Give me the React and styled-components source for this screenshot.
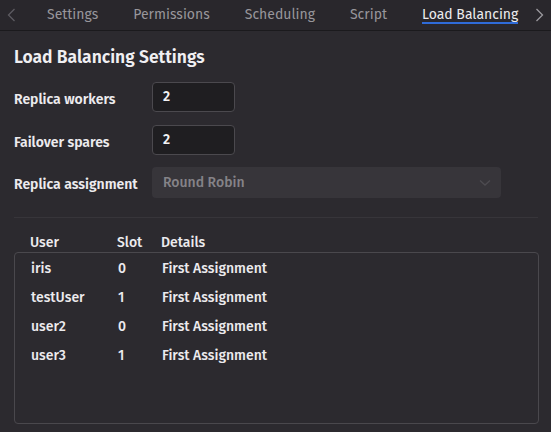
import React from "react";
import styled, { createGlobalStyle } from "styled-components";

const GlobalStyle = createGlobalStyle`
  html, body {
    margin: 0;
    padding: 0;
    background-color: #2c2a2f;
  }
  body {
    font-family: "Fira Sans", "Lato", "Noto Sans", sans-serif;
    color: #e8e7ea;
  }
`;

const Page = styled.div`
  width: 551px;
  height: 432px;
  overflow: hidden;
  display: flex;
  flex-direction: column;
`;

const TabBar = styled.div`
  height: 31px;
  flex: 0 0 31px;
  box-sizing: border-box;
  background-color: #29272c;
  border-bottom: 1px solid #1b1a1d;
  display: flex;
  align-items: center;
  padding: 0 0 0 4px;
`;

const Chevron = styled.span`
  width: 14px;
  height: 30px;
  display: flex;
  align-items: center;
  justify-content: center;
  color: ${({ dim }) => (dim ? "#5d5b61" : "#9b999e")};
  margin-right: ${({ right }) => (right ? "0" : "29px")};
  margin-left: ${({ right }) => (right ? "14px" : "0")};
`;

const Tabs = styled.div`
  display: flex;
  gap: 35px;
`;

const Tab = styled.span`
  position: relative;
  font-size: 14px;
  line-height: 30px;
  color: ${({ active }) => (active ? "#ececee" : "#98969b")};
  white-space: nowrap;

  &::after {
    content: "";
    display: ${({ active }) => (active ? "block" : "none")};
    position: absolute;
    left: 0;
    right: 0;
    bottom: 6px;
    height: 2px;
    background-color: #2f6bd8;
  }
`;

const Content = styled.div`
  padding: 10px 12px 0 14px;
  display: flex;
  flex-direction: column;
`;

const Heading = styled.h2`
  margin: 0;
  font-size: 17.5px;
  font-weight: 600;
  line-height: 34px;
  color: #f0eff2;
`;

const Form = styled.div`
  display: flex;
  flex-direction: column;
  gap: 13px;
  margin-top: 7px;
`;

const Row = styled.div`
  display: flex;
  align-items: center;
  & + & + & {
    margin-top: -1px;
  }
`;

const Label = styled.label`
  width: 138px;
  font-size: 14px;
  font-weight: 600;
  color: #ecebee;
  padding-top: 4px;
`;

const NumberInput = styled.div`
  width: 83px;
  height: 30px;
  box-sizing: border-box;
  background-color: #1f1e21;
  border: 1px solid #4b494e;
  border-radius: 4px;
  font-size: 14px;
  font-weight: 600;
  line-height: 28px;
  padding-left: 10px;
  color: #f2f2f4;
`;

const Select = styled.div`
  width: 349px;
  height: 31px;
  box-sizing: border-box;
  background-color: #37353a;
  border-radius: 4px;
  display: flex;
  align-items: center;
  justify-content: space-between;
  padding: 0 10px 0 11px;
  font-size: 14px;
  font-weight: 500;
  color: #858388;
`;

const Divider = styled.div`
  height: 1px;
  background-color: #37353a;
  margin: 19px 0 0 0;
  width: 524px;
`;

const Table = styled.div`
  margin-top: 15px;
  width: 525px;
`;

const Columns = styled.div`
  display: grid;
  grid-template-columns: 87px 44px 1fr;
  padding-left: 16px;
  font-size: 14px;
  font-weight: 500;
  line-height: 18px;
  height: ${({ head }) => (head ? "19px" : "29px")};
  align-items: center;
  color: #ecebee;
`;

const Box = styled.div`
  height: 172px;
  box-sizing: border-box;
  border: 1px solid #4a484d;
  border-radius: 4px;
  padding-top: 1px;
`;

const rows = [
  ["iris", "0", "First Assignment"],
  ["testUser", "1", "First Assignment"],
  ["user2", "0", "First Assignment"],
  ["user3", "1", "First Assignment"],
];

const ChevronIcon = ({ dir }) => (
  <svg width="9" height="14" viewBox="0 0 9 14" fill="none">
    <path
      d={dir === "left" ? "M7.5 1 L1.5 7 L7.5 13" : "M1.5 1 L7.5 7 L1.5 13"}
      stroke="currentColor"
      strokeWidth="1.3"
    />
  </svg>
);

const App = () => (
  <Page>
    <GlobalStyle />
    <TabBar>
      <Chevron dim>
        <ChevronIcon dir="left" />
      </Chevron>
      <Tabs>
        <Tab>Settings</Tab>
        <Tab>Permissions</Tab>
        <Tab>Scheduling</Tab>
        <Tab>Script</Tab>
        <Tab active>Load Balancing</Tab>
      </Tabs>
      <Chevron right>
        <ChevronIcon dir="right" />
      </Chevron>
    </TabBar>
    <Content>
      <Heading>Load Balancing Settings</Heading>
      <Form>
        <Row>
          <Label>Replica workers</Label>
          <NumberInput>2</NumberInput>
        </Row>
        <Row>
          <Label>Failover spares</Label>
          <NumberInput>2</NumberInput>
        </Row>
        <Row>
          <Label>Replica assignment</Label>
          <Select>
            Round Robin
            <svg width="12" height="8" viewBox="0 0 12 8" fill="none">
              <path d="M1 1.5 L6 6 L11 1.5" stroke="#4d4b50" strokeWidth="1.4" />
            </svg>
          </Select>
        </Row>
      </Form>
      <Divider />
      <Table>
        <Columns head>
          <span>User</span>
          <span>Slot</span>
          <span>Details</span>
        </Columns>
        <Box>
          {rows.map(([user, slot, details]) => (
            <Columns key={user}>
              <span>{user}</span>
              <span>{slot}</span>
              <span>{details}</span>
            </Columns>
          ))}
        </Box>
      </Table>
    </Content>
  </Page>
);

export default App;
